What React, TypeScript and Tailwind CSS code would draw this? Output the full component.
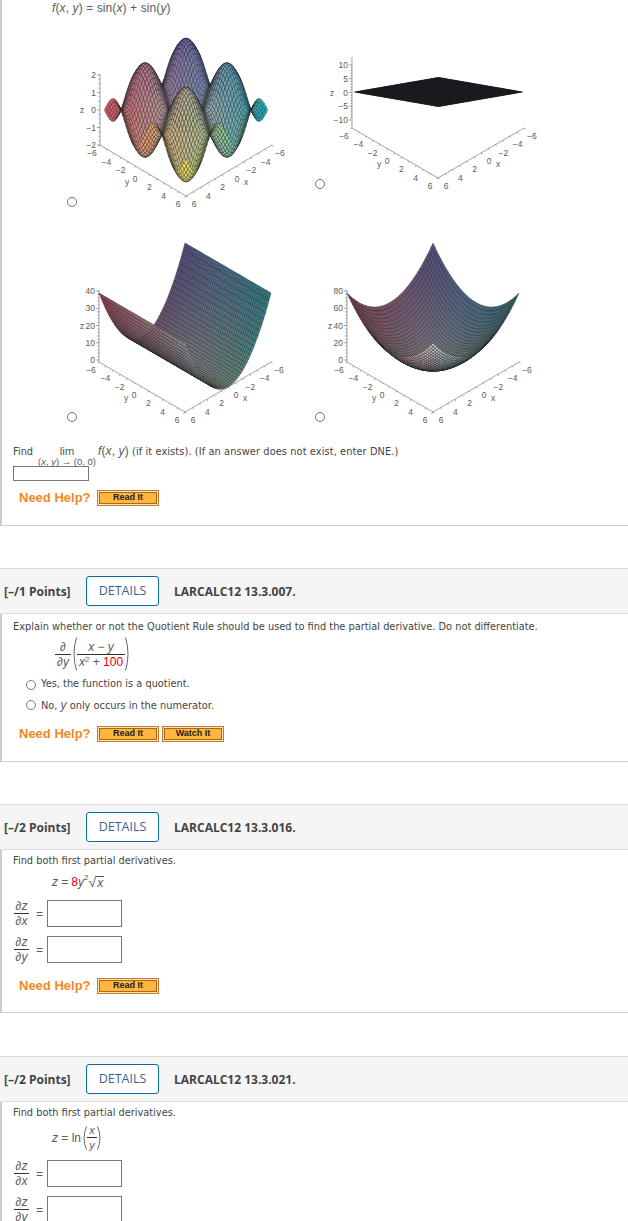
import React from "react";

const body = "font-['DejaVu_Sans',sans-serif] text-[9.8px] text-[#444]";
const math = "font-['Liberation_Sans',sans-serif] text-[12px] text-[#5a5a5a]";
const radio = "m-0 h-[10px] w-[10px] shrink-0 appearance-none rounded-full border border-[#777] bg-white";

type PlotProps = {
  box: [number, number, number, number]; // page x, y, width, height
  bx: number; // bottom corner of the floor
  by: number;
  hw: number;
  hh: number;
  project: (x: number, y: number) => [number, number];
  domain?: number;
  zTicks: { label: string; y: number; minor?: boolean }[];
  zLabelX: number;
  zTop: number;
  dark: number;
  line?: number;
  paleUnderside?: boolean;
};

function mix(a: number[], b: number[], t: number) {
  return a.map((v, i) => v + (b[i] - v) * t);
}

function cellColor(u: number, v: number, dark: number, under: boolean, muted: boolean) {
  const back = [96, 88, 176];
  const left = [232, 80, 96];
  const right = [24, 176, 196];
  const front = under ? [250, 245, 240] : [244, 228, 96];
  const c = mix(mix(back, left, u), mix(right, front, u), v);
  // the middle of the map goes pale
  const d = 1 - Math.min(1, Math.hypot(u - 0.5, v - 0.5) * 1.5);
  let c2 = mix(c, [214, 214, 222], d * 0.45);
  if (muted && !under) c2 = mix(c2, [130, 130, 130], 0.25);
  return `rgb(${c2.map((n) => Math.round(n * dark)).join(",")})`;
}

function Plot({ box, bx, by, hw, hh, project, domain = 6, zTicks, zLabelX, zTop, dark, line = 0.42, paleUnderside }: PlotProps) {
  const n = 46;
  const step = (domain * 2) / n;
  const cells: React.ReactNode[] = [];
  for (let i = 0; i < n; i++) {
    for (let j = 0; j < n; j++) {
      const x = -domain + i * step;
      const y = -domain + j * step;
      const p = [project(x, y), project(x + step, y), project(x + step, y + step), project(x, y + step)];
      const d = "M" + p.map((q) => `${q[0].toFixed(1)} ${q[1].toFixed(1)}`).join("L") + "Z";
      // signed area tells which side of the sheet faces us
      const area = (p[2][0] - p[0][0]) * (p[3][1] - p[1][1]) - (p[3][0] - p[1][0]) * (p[2][1] - p[0][1]);
      const under = !!paleUnderside && area > 0;
      cells.push(<path key={i * n + j} d={d} fill={cellColor((i + 0.5) / n, (j + 0.5) / n, dark, under, !!paleUnderside)} />);
    }
  }
  const lx = bx - hw;
  const rx = bx + hw;
  const fy = by - hh;
  const ticks = [-6, -5, -4, -3, -2, -1, 0, 1, 2, 3, 4, 5, 6];
  return (
    <svg
      width={box[2]}
      height={box[3]}
      viewBox={box.join(" ")}
      className="shrink-0"
      fontFamily="Liberation Sans, sans-serif"
      fontSize="8.5"
      fill="#5a5a5a"
    >
      <g stroke="#666" strokeWidth="0.6">
        <path d={`M${lx} ${zTop}V${fy}L${bx} ${by}L${rx} ${fy}`} fill="none" />
        {ticks.map((t) => {
          const f = (t + 6) / 12;
          return (
            <g key={t}>
              <path d={`M${lx + f * hw} ${fy + f * hh}l-1.5 1.2`} />
              <path d={`M${rx - f * hw} ${fy + f * hh}l1.5 1.2`} />
            </g>
          );
        })}
        {zTicks.map((t) => (
          <path key={t.y} d={`M${lx} ${t.y}h${t.minor ? -1.5 : -3}`} />
        ))}
      </g>
      {zTicks
        .filter((t) => !t.minor)
        .map((t) => (
          <text key={t.label} x={lx - 4} y={t.y + 3} textAnchor="end">
            {t.label}
          </text>
        ))}
      <text x={zLabelX} y={fy - (fy - zTop) / 2 + 3}>z</text>
      {[-6, -4, -2, 0, 2, 4, 6].map((t) => {
        const f = (t + 6) / 12;
        const label = t < 0 ? "−" + -t : String(t);
        return (
          <g key={t} textAnchor="middle">
            <text x={lx + f * hw - 8} y={fy + f * hh + 11}>{label}</text>
            <text x={rx - f * hw + 8} y={fy + f * hh + 11}>{label}</text>
          </g>
        );
      })}
      <text x={bx - hw / 2 - 16} y={fy + hh / 2 + 14} textAnchor="middle">y</text>
      <text x={bx + hw / 2 + 17} y={fy + hh / 2 + 14} textAnchor="middle">x</text>
      <g stroke="#1c1c22" strokeWidth={line} strokeOpacity={0.9}>
        {cells}
      </g>
    </svg>
  );
}

function zScale(values: number[], zeroY: number, perUnit: number, minor: number) {
  const out: { label: string; y: number; minor?: boolean }[] = [];
  const lo = values[0];
  const hi = values[values.length - 1];
  for (let v = lo; v <= hi + 0.001; v += minor) {
    const major = values.some((m) => Math.abs(m - v) < 0.001);
    out.push({ label: v < 0 ? "−" + -v : String(v), y: zeroY - v * perUnit, minor: !major });
  }
  return out;
}

function Option({ bottom, children }: { bottom: string; children: React.ReactNode }) {
  return (
    <div className="flex w-[248px]">
      <input type="radio" name="plot" className={`${radio} mr-px self-end ${bottom}`} />
      {children}
    </div>
  );
}

function OrangeButton({ label }: { label: string }) {
  return (
    <div className="h-[16px] w-[62px] border border-[#c9792b] bg-[#fbe3b8] p-px">
      <div className="flex h-full items-center justify-center border border-[#a9681f] bg-[#ffb63f] font-['Liberation_Sans',sans-serif] text-[9px] font-bold text-[#222]">
        {label}
      </div>
    </div>
  );
}

function NeedHelp({ watch }: { watch?: boolean }) {
  return (
    <div className="flex h-[16px] items-center pl-[17px]">
      <span className="w-[78px] font-['Liberation_Sans',sans-serif] text-[13px] font-bold text-[#f5861f]">Need Help?</span>
      <div className="flex gap-[3px]">
        <OrangeButton label="Read It" />
        {watch && <OrangeButton label="Watch It" />}
      </div>
    </div>
  );
}

function Header({ points, code }: { points: string; code: string }) {
  return (
    <div className="flex h-[46px] items-center border-y border-[#ddd] bg-[#f5f5f5] pl-[4px] font-['Open_Sans',sans-serif] text-[#444]">
      <span className="mt-[1px] w-[82px] text-[12px] font-bold">[–/{points} Points]</span>
      <div className="flex h-[30px] w-[73px] items-center justify-center rounded-[3px] border border-[#0b6aa2] bg-white pt-[1px] text-[12.5px] text-[#3b5f95]">
        DETAILS
      </div>
      <span className="ml-[15px] mt-[1px] text-[12px] font-bold">{code}</span>
    </div>
  );
}

function Paren({ side, h }: { side: "l" | "r"; h: number }) {
  return (
    <svg width="6" height={h} viewBox={`0 0 6 ${h}`} className="shrink-0" fill="none" stroke="#555" strokeWidth="0.9">
      <path d={side === "l" ? `M5.5 0.5Q0.5 ${h / 2} 5.5 ${h - 0.5}` : `M0.5 0.5Q5.5 ${h / 2} 0.5 ${h - 0.5}`} />
    </svg>
  );
}

function Frac({ top, bottom, w }: { top: React.ReactNode; bottom: React.ReactNode; w: string }) {
  return (
    <div className={`flex flex-col items-center ${w}`}>
      <div className="h-[13px] leading-[13px]">{top}</div>
      <div className="h-px w-full bg-[#333]" />
      <div className="h-[13px] leading-[15px]">{bottom}</div>
    </div>
  );
}

function PartialRow({ v }: { v: string }) {
  return (
    <div className={`flex items-center pl-[14px] ${math}`}>
      <Frac w="w-[15px]" top={<i>∂z</i>} bottom={<i>∂{v}</i>} />
      <span className="ml-[7px] w-[11px]">=</span>
      <div className="h-[27px] w-[75px] border border-[#777] bg-white" />
    </div>
  );
}

export default function App() {
  return (
    <div className="h-[1221px] w-[628px] overflow-hidden bg-white">
      {/* first question, carried over from the previous screen */}
      <div className="border-b border-l-2 border-[#ccc] pb-[19px]">
        <div className={`h-[30px] pl-[50px] pt-[1px] leading-[15px] tracking-[0.1px] ${math}`}>
          <i>f</i>(<i>x</i>, <i>y</i>) = sin(<i>x</i>) + sin(<i>y</i>)
        </div>
        <div className="flex pl-[65px]">
          <Option bottom="mb-[3px]">
            <Plot
              box={[78, 30, 236, 180]}
              bx={186}
              by={196}
              hw={86}
              hh={51}
              domain={2 * Math.PI}
              project={(x, y) => [186 + 6.5 * (y - x), 110 + 3.9 * (x + y) - 17.1 * (Math.sin(x) + Math.sin(y))]}
              zTicks={zScale([-2, -1, 0, 1, 2], 110, 17.5, 0.25)}
              zLabelX={80}
              zTop={74}
              dark={1}
            />
          </Option>
          <Option bottom="mb-[21px]">
            <Plot
              box={[326, 30, 236, 180]}
              bx={438}
              by={178}
              hw={86}
              hh={50}
              project={(x, y) => [438.5 + 7 * (y - x), 92 + 1.21 * (x + y)]}
              zTicks={zScale([-10, -5, 0, 5, 10], 92.5, 2.75, 1)}
              zLabelX={330}
              zTop={57}
              dark={0.1}
              line={0.7}
            />
          </Option>
        </div>
        <div className="mt-[25px] flex pl-[65px]">
          <Option bottom="mb-[3px]">
            <Plot
              box={[78, 235, 236, 190]}
              bx={185}
              by={412}
              hw={86}
              hh={50}
              project={(x, y) => [185 + (86 / 12) * (y - x), 412 + (50 / 12) * (x + y - 12) - (x * x * 69) / 36]}
              zTicks={zScale([0, 10, 20, 30, 40], 360, 1.725, 2)}
              zLabelX={80}
              zTop={290}
              dark={0.8}
              paleUnderside
            />
          </Option>
          <Option bottom="mb-[3px]">
            <Plot
              box={[326, 235, 236, 190]}
              bx={433}
              by={412}
              hw={86}
              hh={50}
              project={(x, y) => [433 + (86 / 12) * (y - x), 412 + (50 / 12) * (x + y - 12) - ((x * x + y * y) * 69) / 72]}
              zTicks={zScale([0, 20, 40, 60, 80], 360, 0.8625, 4)}
              zLabelX={328}
              zTop={290}
              dark={0.8}
              paleUnderside
            />
          </Option>
        </div>
        <div className={`mt-[20px] flex h-[21px] pl-[11px] ${body}`}>
          <span className="w-[24px] leading-[13px]">Find</span>
          <div className={`flex w-[60px] flex-col items-center ${math}`}>
            <span className="text-[11.5px] leading-[12px]">lim</span>
            <span className="whitespace-nowrap text-[9.5px] leading-[9px]">
              (<i>x</i>, <i>y</i>) → (0, 0)
            </span>
          </div>
          <span className="ml-[1px] leading-[13px] tracking-[0.1px]">
            <span className={math}><i>f</i>(<i>x</i>, <i>y</i>)</span> (if it exists). (If an answer does not exist, enter DNE.)
          </span>
        </div>
        <div className="ml-[11px] h-[15px] w-[76px] border border-[#777]" />
        <div className="mt-[9px]">
          <NeedHelp />
        </div>
      </div>

      <div className="mt-[42px]">
        <Header points="1" code="LARCALC12 13.3.007." />
      </div>
      <div className="h-[148px] border-b border-l-2 border-[#ccc] pl-[11px] pt-[6px]">
        <div className={`whitespace-nowrap leading-[14px] ${body}`}>
          Explain whether or not the Quotient Rule should be used to find the partial derivative. Do not differentiate.
        </div>
        <div className={`ml-[42px] mt-[3px] flex items-center ${math}`}>
          <Frac w="w-[16px]" top={<i>∂</i>} bottom={<i>∂y</i>} />
          <Paren side="l" h={34} />
          <Frac
            w="w-[48px]"
            top={<i>x − y</i>}
            bottom={<span><i>x</i><sup className="text-[8px]">2</sup> + <span className="text-[#e00000]">100</span></span>}
          />
          <Paren side="r" h={34} />
        </div>
        <div className={`ml-[13px] mt-[7px] flex flex-col gap-[7px] ${body}`}>
          <label className="flex h-[13px] items-center gap-[5px]">
            <input type="radio" name="q2" className={radio} />
            <span>Yes, the function is a quotient.</span>
          </label>
          <label className="flex h-[13px] items-center gap-[5px]">
            <input type="radio" name="q2" className={radio} />
            <span>No, <i className={math}>y</i> only occurs in the numerator.</span>
          </label>
        </div>
        <div className="-ml-[11px] mt-[15px]">
          <NeedHelp watch />
        </div>
      </div>

      <div className="mt-[42px]">
        <Header points="2" code="LARCALC12 13.3.016." />
      </div>
      <div className="h-[163px] border-b border-l-2 border-[#ccc] pt-[4px]">
        <div className={`pl-[11px] leading-[14px] ${body}`}>Find both first partial derivatives.</div>
        <div className={`ml-[50px] mt-[5px] flex h-[18px] items-center ${math}`}>
          <i>z</i>&nbsp;= <span className="ml-[3px] text-[#e00000]">8</span><i>y</i>
          <sup className="text-[8px]">2</sup>
          <span className="text-[14px]">√</span>
          <i className="border-t border-[#555] px-[1px] leading-[12px]">x</i>
        </div>
        <div className="ml-[-2px] mt-[9px] flex flex-col gap-[9px]">
          <PartialRow v="x" />
          <PartialRow v="y" />
        </div>
        <div className="mt-[15px]">
          <NeedHelp />
        </div>
      </div>

      <div className="mt-[43px]">
        <Header points="2" code="LARCALC12 13.3.021." />
      </div>
      <div className="border-l-2 border-[#ccc] pt-[4px]">
        <div className={`pl-[11px] leading-[14px] ${body}`}>Find both first partial derivatives.</div>
        <div className={`ml-[50px] mt-[4px] flex items-center ${math}`}>
          <i>z</i>&nbsp;= ln
          <Paren side="l" h={24} />
          <div className="text-[11px]">
            <Frac w="w-[10px]" top={<i>x</i>} bottom={<i>y</i>} />
          </div>
          <Paren side="r" h={24} />
        </div>
        <div className="ml-[-2px] mt-[9px] flex flex-col gap-[9px]">
          <PartialRow v="x" />
          <PartialRow v="y" />
        </div>
      </div>
    </div>
  );
}
